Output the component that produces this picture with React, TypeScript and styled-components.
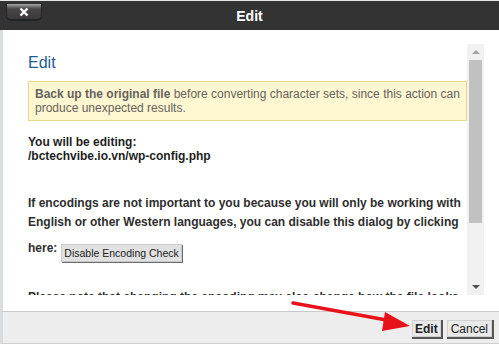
import styled, { createGlobalStyle } from "styled-components";

const GlobalStyle = createGlobalStyle`
    html, body {
        margin : 0;
        padding : 0;
        background : #fff;
    }
    body {
        font-family : 'Liberation Sans', Arial, sans-serif;
    }
`

const Dialog = styled.div`
    position : relative;
    width : 499px;
    height : 344px;
    display : flex;
    flex-direction : column;
    border-top : 1px solid #e6e6e6;
    box-sizing : border-box;
    overflow : hidden;
    background : #fff;
`

const TitleBar = styled.div`
    height : 29px;
    flex : none;
    background : #333333;
    display : flex;
    align-items : center;
    justify-content : center;
    position : relative;
    color : #fff;
    font-weight : 700;
    font-size : 14px;
`

const CloseButton = styled.button`
    position : absolute;
    left : 7px;
    top : 3px;
    width : 34px;
    height : 15px;
    padding : 0;
    border : none;
    border-radius : 0 0 4px 4px;
    background : linear-gradient(#a8a8a8 0px, #6a6a6a 3px, #474545 5px, #3b3939 100%);
    box-shadow : 0 1px 0 1px #1f2324;
    display : flex;
    align-items : center;
    justify-content : center;
`

const Body = styled.div`
    flex : 1;
    border-left : 3px solid #dadde0;
    padding : 14px 15px 16px 25px;
    display : flex;
    min-height : 0;
`

const ScrollArea = styled.div`
    flex : 1;
    overflow : hidden;
    padding-top : 10px;
    color : #333;
    font-size : 12px;
`

const Scrollbar = styled.div`
    width : 17px;
    flex : none;
    background : #f1f1f1;
    display : flex;
    flex-direction : column;
    align-items : center;
`

const ScrollArrow = styled.div<{ $down?: boolean }>`
    height : 16px;
    width : 17px;
    display : flex;
    align-items : center;
    justify-content : center;
    &::after {
        content : '';
        border-left : 4px solid transparent;
        border-right : 4px solid transparent;
        ${p => p.$down ? 'border-top : 4px solid #505050;' : 'border-bottom : 4px solid #a3a3a3;'}
    }
`

const ScrollThumb = styled.div`
    width : 13px;
    height : 163px;
    background : #c1c1c1;
`

const ScrollTrack = styled.div`
    flex : 1;
`

const Heading = styled.h2`
    margin : 0 0 9px 0;
    font-size : 16px;
    line-height : 18px;
    font-weight : 400;
    color : #1f5b98;
`

const Notice = styled.div`
    background : #fff6d2;
    border : 1px solid #e6d98a;
    padding : 5px 6px;
    line-height : 14px;
    color : #66645c;
    & b {
        font-weight : 700;
    }
`

const Line = styled.div`
    white-space : nowrap;
`

const Editing = styled.div`
    margin-top : 14px;
    font-weight : 700;
    line-height : 14px;
    color : #1e1e1e;
`

const Para = styled.div`
    margin-top : 31px;
    font-weight : 700;
    line-height : 19px;
    color : #2e2e2e;
`

const HereRow = styled.div`
    display : flex;
    align-items : flex-start;
    margin-top : 9px;
    font-weight : 700;
    color : #2e2e2e;
    line-height : 14px;
`

const SmallButton = styled.button`
    margin : 3px 0 0 4px;
    height : 18px;
    padding : 0 2px;
    font-family : 'Liberation Sans', Arial, sans-serif;
    font-size : 10.5px;
    color : #222;
    background : #e1e1e1;
    border : 1px solid #c9c9c9;
    box-shadow : 1px 1px 0 #6d6d6d;
    border-radius : 0;
`

const NextPara = styled.div`
    margin-top : 26px;
    font-weight : 700;
    line-height : 19px;
    color : #2e2e2e;
    white-space : nowrap;
`

const Footer = styled.div`
    height : 33px;
    flex : none;
    border-left : 3px solid #dadde0;
    border-top : 1px solid #c9c9c9;
    border-bottom : 1px solid #cfcfcf;
    background : #ededed;
    display : flex;
    align-items : center;
    justify-content : flex-end;
    gap : 6px;
    padding : 0 7px 0 0;
    box-sizing : border-box;
`

const FooterButton = styled.button<{ $primary?: boolean }>`
    height : 17px;
    margin-top : 2px;
    padding : 0 ${p => p.$primary ? 2 : 3}px;
    font-family : 'Liberation Sans', Arial, sans-serif;
    font-size : 12px;
    font-weight : ${p => p.$primary ? 700 : 400};
    color : #222;
    background : #e9e9e9;
    border : 1px solid #d2d2d2;
    box-shadow : 1px 1px 0 1px #555;
    border-radius : 0;
`

const Arrow = styled.svg`
    position : absolute;
    left : 0;
    top : 0;
    pointer-events : none;
`

const App = () => {
    return (
        <>
            <GlobalStyle />
            <Dialog>
                <TitleBar>
                    <CloseButton aria-label="close">
                        <svg width="10" height="10" viewBox="0 0 10 10">
                            <path d="M1.5 1.5 L8.5 8.5 M8.5 1.5 L1.5 8.5" stroke="#fff" strokeWidth="2.4" />
                        </svg>
                    </CloseButton>
                    Edit
                </TitleBar>
                <Body>
                    <ScrollArea>
                        <Heading>Edit</Heading>
                        <Notice>
                            <Line><b>Back up the original file</b> before converting character sets, since this action can</Line>
                            <Line>produce unexpected results.</Line>
                        </Notice>
                        <Editing>
                            <Line>You will be editing:</Line>
                            <Line>/bctechvibe.io.vn/wp-config.php</Line>
                        </Editing>
                        <Para>
                            <Line>If encodings are not important to you because you will only be working with</Line>
                            <Line>English or other Western languages, you can disable this dialog by clicking</Line>
                        </Para>
                        <HereRow>
                            here:
                            <SmallButton>Disable Encoding Check</SmallButton>
                        </HereRow>
                        <NextPara>Please note that changing the encoding may also change how the file looks.</NextPara>
                    </ScrollArea>
                    <Scrollbar>
                        <ScrollArrow />
                        <ScrollThumb />
                        <ScrollTrack />
                        <ScrollArrow $down />
                    </Scrollbar>
                </Body>
                <Footer>
                    <FooterButton $primary>Edit</FooterButton>
                    <FooterButton>Cancel</FooterButton>
                </Footer>
                <Arrow width="499" height="344" viewBox="0 0 499 344">
                    <line x1="293" y1="302" x2="392" y2="320" stroke="#e8131a" strokeWidth="3.5" strokeLinecap="round" />
                    <polygon points="410,325 385,311 382,330" fill="#e8131a" />
                </Arrow>
            </Dialog>
        </>
    );
}

export default App;
